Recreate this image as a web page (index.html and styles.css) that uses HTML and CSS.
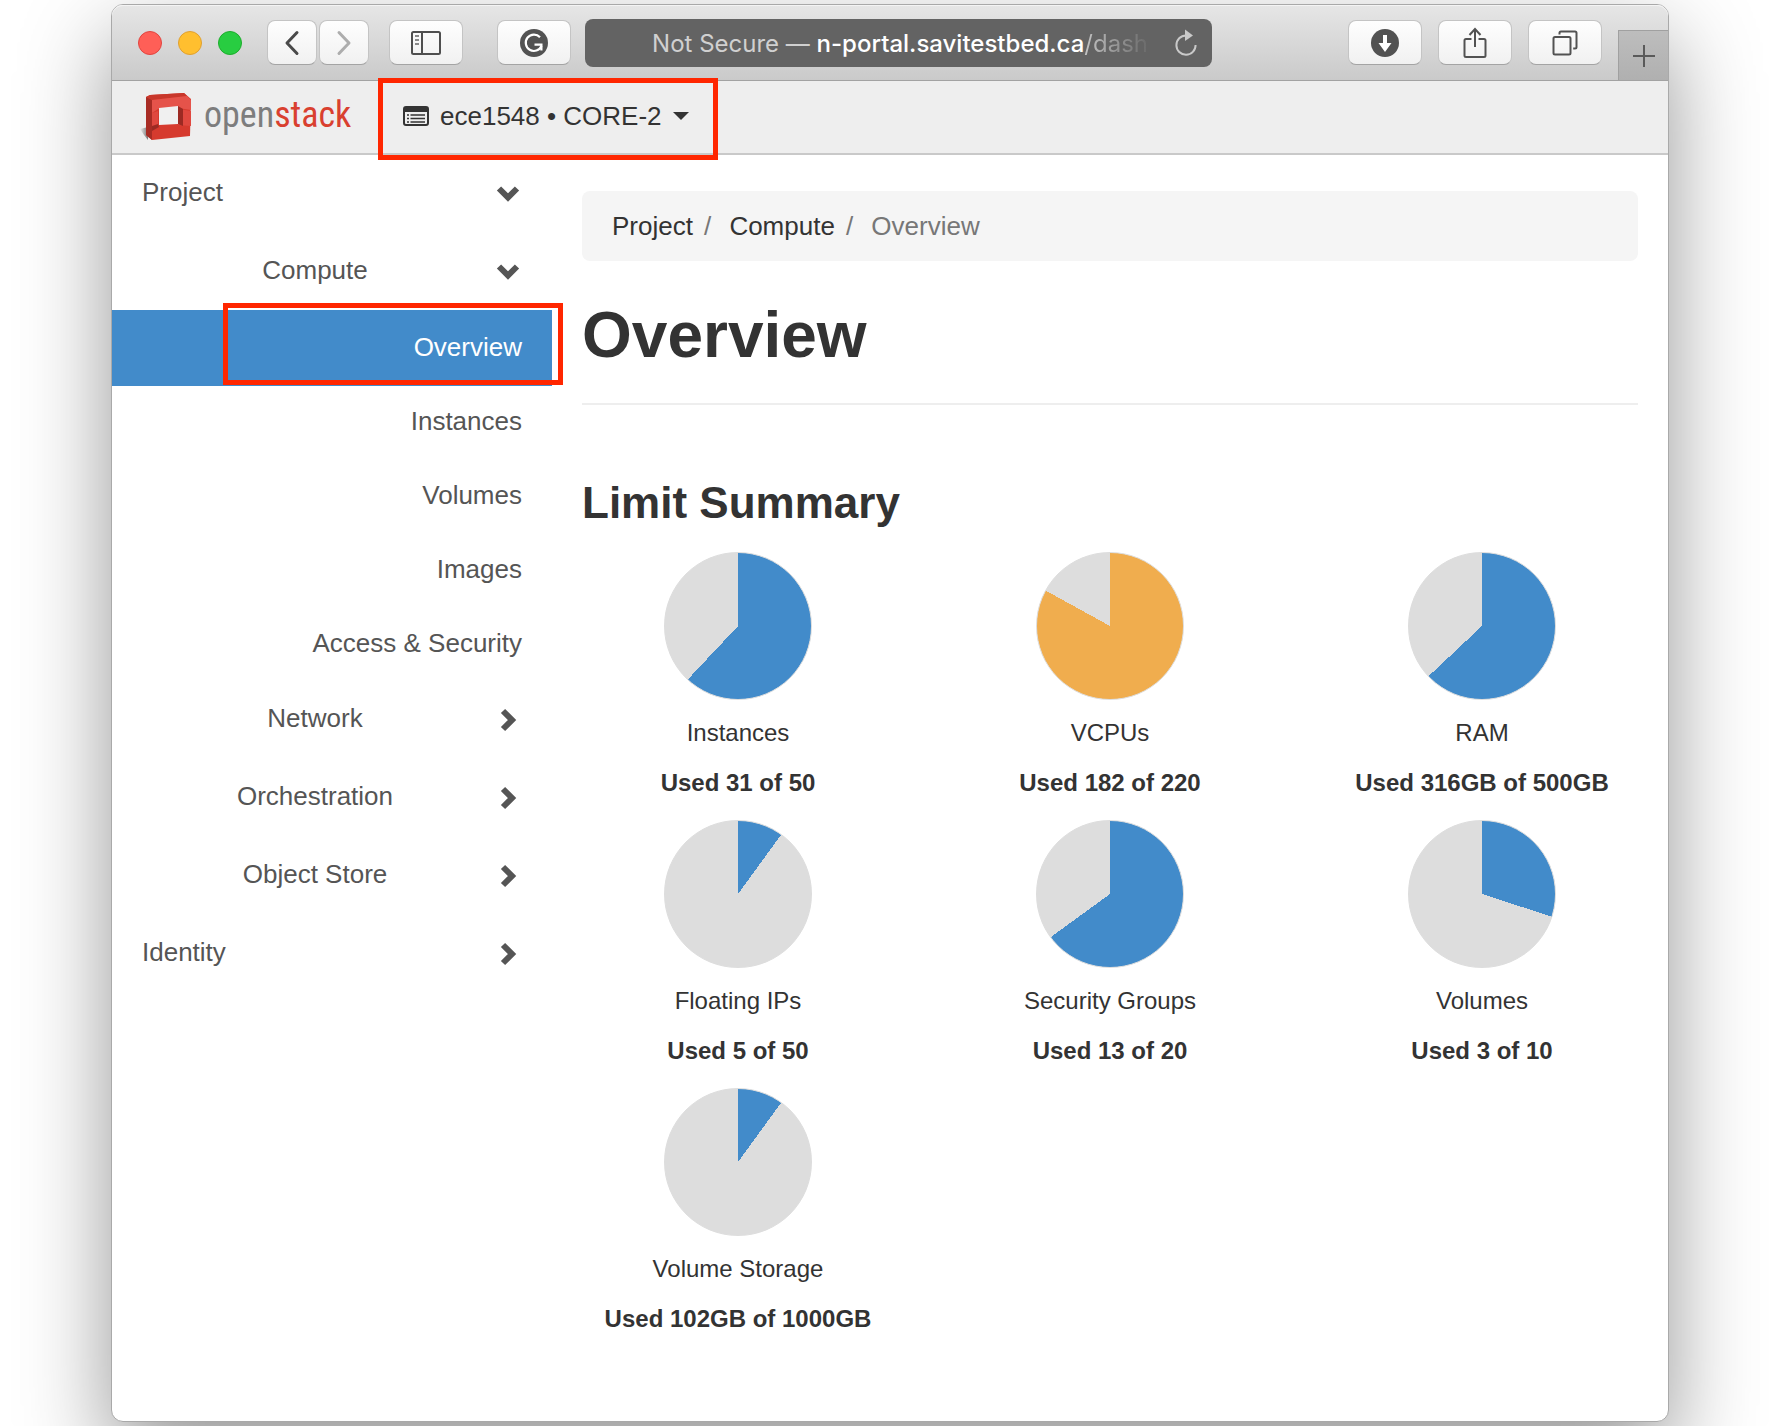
FILE: index.html
```html
<!DOCTYPE html>
<html lang="en">
<head>
<meta charset="utf-8">
<title>Overview - OpenStack Dashboard</title>
<link rel="stylesheet" href="styles.css">
</head>
<body>
<div class="window">
  <div class="toolbar">
    <div class="lights">
      <button class="light light-close" aria-label="Close"></button>
      <button class="light light-min" aria-label="Minimize"></button>
      <button class="light light-max" aria-label="Zoom"></button>
    </div>
    <div class="nav-buttons">
      <button class="tool tool-small" aria-label="Back">
        <svg width="16" height="26" viewBox="0 0 16 26"><path d="M13 2.500 3 13l10 10.500" fill="none" stroke="#4a4a4a" stroke-width="3" stroke-linecap="round" stroke-linejoin="round"/></svg>
      </button>
      <button class="tool tool-small" aria-label="Forward">
        <svg width="16" height="26" viewBox="0 0 16 26"><path d="M3 2.500 13 13 3 23.500" fill="none" stroke="#adadad" stroke-width="3" stroke-linecap="round" stroke-linejoin="round"/></svg>
      </button>
    </div>
    <button class="tool" aria-label="Show sidebar">
      <svg width="30" height="24" viewBox="0 0 30 24"><g fill="none" stroke="#4f4f4f" stroke-width="2"><rect x="1" y="1" width="28" height="22" rx="1.500"/><path d="M11 1v22"/></g><path d="M4 5h4M4 9h4M4 13h4" stroke="#8a8a8a" stroke-width="2"/></svg>
    </button>
    <div class="address-group">
      <button class="tool" aria-label="Grammarly">
        <svg width="28" height="28" viewBox="0 0 28 28"><circle cx="14" cy="14" r="14" fill="#525252"/><path d="M20 8.200A8.200 8.200 0 1 0 21.500 17" fill="none" stroke="#fff" stroke-width="2.200"/><path d="M14.500 15.600H21.400V21.600" fill="none" stroke="#fff" stroke-width="2.200"/></svg>
      </button>
      <div class="address">
        <button class="address-text"><span>Not Secure — </span><span class="domain">n-portal.savitestbed.ca</span><span class="path">/dash</span></button>
        <button class="reload" aria-label="Reload">
          <svg width="24" height="28" viewBox="0 0 24 28"><path d="M12 6.500A9.600 9.600 0 1 0 21.600 16" fill="none" stroke="#c9c9c9" stroke-width="2"/><path d="M11 0.500 19 6.500 11 12Z" fill="#c9c9c9"/></svg>
        </button>
      </div>
    </div>
    <div class="right-tools">
      <button class="tool" aria-label="Downloads">
        <svg width="28" height="28" viewBox="0 0 28 28"><circle cx="14" cy="14" r="14" fill="#525252"/><path d="M12 6h4v8h4.500L14 23 7.500 14H12Z" fill="#fff"/></svg>
      </button>
      <button class="tool" aria-label="Share">
        <svg width="24" height="32" viewBox="0 0 24 32" fill="none" stroke="#525252" stroke-width="2"><path d="M8.500 12H3a1.500 1.500 0 0 0-1.500 1.500v15A1.500 1.500 0 0 0 3 30h18a1.500 1.500 0 0 0 1.500-1.500v-15A1.500 1.500 0 0 0 21 12h-5.500M12 20V2M6.500 8 12 2l5.500 6"/></svg>
      </button>
      <button class="tool" aria-label="Show tabs">
        <svg width="26" height="26" viewBox="0 0 26 26" fill="none" stroke="#525252" stroke-width="2"><rect x="1.500" y="7" width="17" height="17.500" rx="1.500"/><path d="M7.500 4.500V3A1.500 1.500 0 0 1 9 1.500h14A1.500 1.500 0 0 1 24.500 3v14a1.500 1.500 0 0 1-1.500 1.500h-1.800"/></svg>
      </button>
    </div>
    <button class="new-tab" aria-label="New tab">
      <svg width="22" height="22" viewBox="0 0 22 22"><path d="M11 0v22M0 11h22" stroke="#5a5a5a" stroke-width="2"/></svg>
    </button>
  </div>

  <header class="site-header">
    <a class="brand" href="#">
      <svg width="52" height="50" viewBox="0 0 52 50">
        <defs><linearGradient id="shade" x1="1" x2="0"><stop offset="0" stop-color="#777"/><stop offset="1" stop-color="#eee"/></linearGradient></defs>
        <path d="M0 37 8 35V48L4 43Z" fill="url(#shade)"/>
        <path d="M6 5 10 3 44 1 51 7 50 44 12 48 6 43Z" fill="#d63a2e"/>
        <path d="M6 5 12 8V48L6 43Z" fill="#a82c24"/>
        <path d="M6 5 10 3 44 1 47 4 12 8Z" fill="#c8372b"/>
        <path d="M12 8 47 4 51 8V18L38 16 18 17 12 21Z" fill="#e5534a"/>
        <path d="M12 21 18 19V34L12 36ZM38 17 51 19V34L38 33Z" fill="#e0483f"/>
        <path d="M38 14 43 17V34L38 32ZM12 34 18 32 19 35 12 39Z" fill="#9c2a23"/>
        <path d="M19 16 38 14V32L19 33Z" fill="#f0f0f0"/>
      </svg>
      <span class="brand-name"><span class="brand-open">open</span><span class="brand-stack">stack</span></span>
    </a>
    <div class="project-picker highlight">
      <button class="picker-button">
        <svg width="26" height="20" viewBox="0 0 26 20"><rect x="1" y="1" width="24" height="18" rx="2" fill="none" stroke="#333" stroke-width="2"/><path d="M1 1h24v5H1Z" fill="#333"/><path d="M4 9h2M4 12.500h2M4 16h2M7.500 9H22M7.500 12.500H22M7.500 16H22" stroke="#333" stroke-width="1.600"/></svg>
        <span>ece1548 • CORE-2</span>
        <svg width="16" height="8" viewBox="0 0 16 8"><path d="M0 0h16L8 8Z" fill="#333"/></svg>
      </button>
    </div>
  </header>

  <div class="layout">
    <nav class="sidebar">
      <button class="group group-top"><span>Project</span><svg class="chevron" viewBox="0 0 26 26"><path d="M3 8.500 12 17.500 21 8.500"/></svg></button>
      <button class="group"><span>Compute</span><svg class="chevron" viewBox="0 0 26 26"><path d="M3 8.500 12 17.500 21 8.500"/></svg></button>
      <a class="item item-active highlight" href="#">Overview</a>
      <a class="item" href="#">Instances</a>
      <a class="item" href="#">Volumes</a>
      <a class="item" href="#">Images</a>
      <a class="item" href="#">Access &amp; Security</a>
      <button class="group"><span>Network</span><svg class="chevron" viewBox="0 0 26 26"><path d="M7 5 16 14 7 23"/></svg></button>
      <button class="group"><span>Orchestration</span><svg class="chevron" viewBox="0 0 26 26"><path d="M7 5 16 14 7 23"/></svg></button>
      <button class="group"><span>Object Store</span><svg class="chevron" viewBox="0 0 26 26"><path d="M7 5 16 14 7 23"/></svg></button>
      <button class="group group-top"><span>Identity</span><svg class="chevron" viewBox="0 0 26 26"><path d="M7 5 16 14 7 23"/></svg></button>
    </nav>

    <main class="content">
      <ol class="breadcrumb">
        <li><a href="#">Project</a></li>
        <li><a href="#">Compute</a></li>
        <li class="current">Overview</li>
      </ol>
      <h1>Overview</h1>
      <h2>Limit Summary</h2>
      <div class="quotas">
        <div class="quota"><div class="pie" style="--used: 62%"></div><p>Instances</p><strong>Used 31 of 50</strong></div>
        <div class="quota"><div class="pie pie-warning" style="--used: 83%"></div><p>VCPUs</p><strong>Used 182 of 220</strong></div>
        <div class="quota"><div class="pie" style="--used: 63%"></div><p>RAM</p><strong>Used 316GB of 500GB</strong></div>
        <div class="quota"><div class="pie" style="--used: 10%"></div><p>Floating IPs</p><strong>Used 5 of 50</strong></div>
        <div class="quota"><div class="pie" style="--used: 65%"></div><p>Security Groups</p><strong>Used 13 of 20</strong></div>
        <div class="quota"><div class="pie" style="--used: 30%"></div><p>Volumes</p><strong>Used 3 of 10</strong></div>
        <div class="quota"><div class="pie" style="--used: 10%"></div><p>Volume Storage</p><strong>Used 102GB of 1000GB</strong></div>
      </div>
    </main>
  </div>
</div>
</body>
</html>
```
FILE: styles.css
```css
* {
  box-sizing: border-box;
}

body {
  display: flex;
  min-height: 100vh;
  margin: 0;
  padding: 4px 111px;
  background: #fff;
  color: #333;
  font: 26px/38px "Liberation Sans", Arial, sans-serif;
}

button {
  padding: 0;
  border: 0;
  background: none;
  color: inherit;
  font: inherit;
}

a {
  color: inherit;
  text-decoration: none;
}

svg {
  display: block;
  flex: none;
}

.window {
  flex: 1;
  min-width: 0;
  border: 1px solid #a9a9a9;
  border-radius: 12px;
  background: #fff;
  box-shadow: 0 36px 90px rgba(0, 0, 0, 0.42);
}

/* Browser toolbar */
.toolbar {
  display: flex;
  align-items: center;
  height: 76px;
  padding-left: 26px;
  border-bottom: 1px solid #a2a2a2;
  border-radius: 11px 11px 0 0;
  background: linear-gradient(#e6e6e6, #cacaca);
  box-shadow: inset 0 1px #f4f4f4;
  overflow: hidden;
}

.lights {
  display: flex;
  gap: 16px;
  margin-right: 25px;
}

.light {
  width: 24px;
  height: 24px;
  border: 1px solid;
  border-radius: 50%;
}

.light-close {
  border-color: #e2443f;
  background: #ff5f57;
}

.light-min {
  border-color: #e0a030;
  background: #ffbf2f;
}

.light-max {
  border-color: #1dad2c;
  background: #28cd41;
}

.nav-buttons {
  display: flex;
  gap: 2px;
  margin-right: 20px;
}

.tool {
  display: flex;
  flex: none;
  align-items: center;
  justify-content: center;
  width: 74px;
  height: 45px;
  border: 1px solid #c4c4c4;
  border-bottom-color: #a4a4a4;
  border-radius: 8px;
  background: linear-gradient(#fefefe, #f1f1f1);
}

.tool-small {
  width: 50px;
}

.address-group {
  display: flex;
  flex: 1;
  align-items: center;
  gap: 14px;
  min-width: 0;
  margin: 0 136px 0 34px;
}

.address {
  display: flex;
  flex: 1;
  align-items: center;
  justify-content: flex-end;
  min-width: 0;
  height: 48px;
  padding-right: 14px;
  border-radius: 8px;
  background: #636363;
}

.address-text {
  overflow: hidden;
  padding-top: 3px;
  color: #d0d0d0;
  font: 24px/34px Inter, "Liberation Sans", sans-serif;
  white-space: pre;
}

.domain {
  color: #fff;
  font-weight: 500;
}

.path {
  background: linear-gradient(90deg, #c4c4c4, #6a6a6a);
  background-clip: text;
  color: transparent;
}

.reload {
  margin-left: 26px;
}

.right-tools {
  display: flex;
  gap: 16px;
  margin-right: 16px;
}

.new-tab {
  display: flex;
  align-items: center;
  align-self: flex-end;
  justify-content: center;
  width: 50px;
  height: 50px;
  border: solid #a0a0a0;
  border-width: 1px 0 0 1px;
  background: linear-gradient(#bdbdbd, #b0b0b0);
}

/* Dashboard header */
.site-header {
  display: flex;
  height: 74px;
  padding-left: 28px;
  border-bottom: 2px solid #c9c9c9;
  background: #eee;
}

.brand {
  display: flex;
  align-items: center;
  gap: 12px;
  width: 238px;
}

.brand-name {
  padding-bottom: 4px;
  font: 36px/46px "Liberation Sans Narrow", "Roboto Condensed", "Liberation Sans", sans-serif;
}

.brand-open {
  color: #7d7d7d;
}

.brand-stack {
  color: #d9402f;
}

/* Red outline drawn over the page to call out a control */
.highlight {
  position: relative;
}

.highlight::after {
  position: absolute;
  border: 5px solid #ff2600;
  content: "";
  pointer-events: none;
}

.project-picker {
  padding: 16px 29px 0 25px;
}

.project-picker::after {
  inset: -3px 0 -7px;
}

.picker-button {
  display: flex;
  align-items: center;
  gap: 11px;
}

/* Body */
.layout {
  display: flex;
}

.sidebar {
  flex: none;
  width: 440px;
  margin-top: -1px;
  color: #555;
}

.group {
  display: flex;
  align-items: center;
  gap: 8px;
  width: 100%;
  height: 78px;
  padding: 0 30px;
}

.group span {
  flex: 1;
  padding-bottom: 2px;
}

.group-top {
  text-align: left;
}

.chevron {
  width: 26px;
  height: 26px;
  fill: none;
  stroke: #555;
  stroke-width: 6;
}

.item {
  display: block;
  padding: 18px 30px;
  text-align: right;
}

.item-active {
  height: 76px;
  margin-bottom: -2px;
  background: #428bca;
  color: #fff;
}

.item-active::after {
  inset: -7px -11px 1px 111px;
}

.content {
  flex: 1;
  min-width: 0;
  padding: 36px 30px;
}

.breadcrumb {
  display: flex;
  margin: 0;
  padding: 16px 30px;
  border-radius: 8px;
  background: #f5f5f5;
  list-style: none;
}

.breadcrumb li + li::before {
  padding: 0 11px;
  color: #777;
  content: "/\00a0";
}

.breadcrumb .current {
  color: #777;
}

h1 {
  margin: 0;
  padding: 38px 0 32px;
  border-bottom: 2px solid #eee;
  font-size: 64px;
  line-height: 72px;
}

h2 {
  margin: 71px 0 22px;
  font-size: 44px;
  line-height: 54px;
}

.quotas {
  display: grid;
  grid-template-columns: repeat(3, 1fr);
  row-gap: 20px;
  margin: 0 -30px;
}

.quota {
  display: flex;
  flex-direction: column;
  align-items: center;
  font-size: 24px;
  line-height: 34px;
}

.quota p {
  margin: 16px 0;
}

.pie {
  --fill: #428bca;
  width: 148px;
  height: 148px;
  border: 1px solid #ddd;
  border-radius: 50%;
  background: conic-gradient(var(--fill) var(--used), #ddd 0);
}

.pie-warning {
  --fill: #f0ad4e;
}
```
